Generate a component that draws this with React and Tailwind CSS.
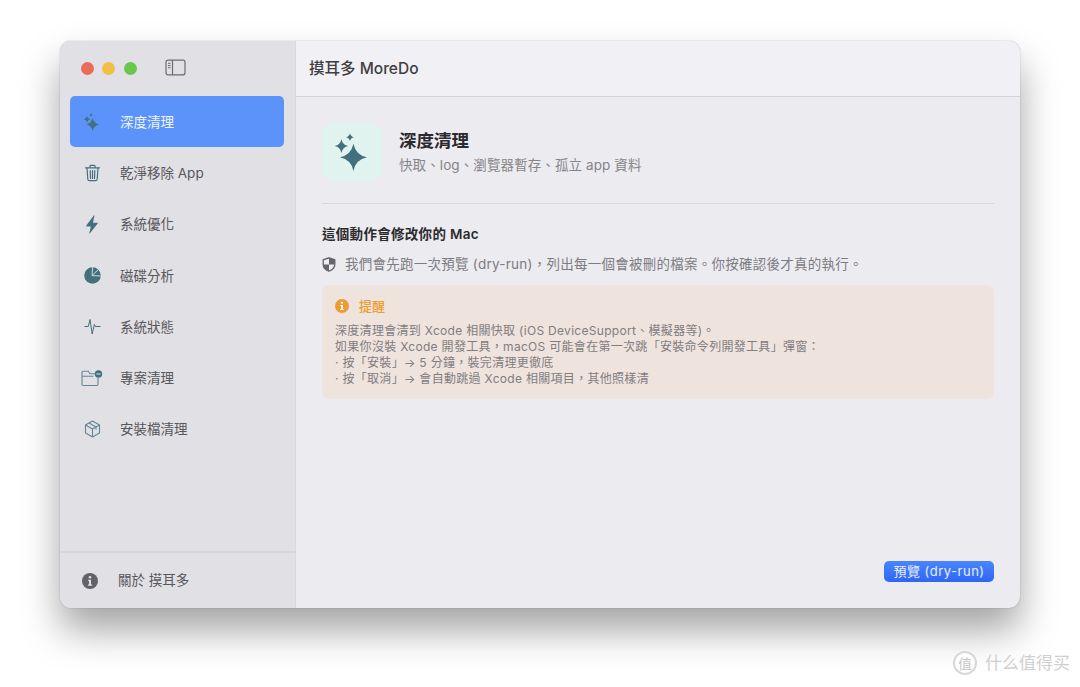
import React from "react";

const FONT = "font-['Inter','Noto_Sans_CJK_TC',sans-serif]";

// four point star, k pulls the sides in towards the middle
const star = (cx, cy, r, k = 0.17) => {
  const c = r * k;
  return `M${cx} ${cy - r}Q${cx + c} ${cy - c} ${cx + r} ${cy}Q${cx + c} ${cy + c} ${cx} ${cy + r}Q${cx - c} ${cy + c} ${cx - r} ${cy}Q${cx - c} ${cy - c} ${cx} ${cy - r}Z`;
};

const Sparkles = ({ size = 20, color = "#44707e" }) => (
  <svg width={size} height={size} viewBox="0 0 32 32" fill={color}>
    <path d={star(17.2, 20.5, 11.4)} />
    <path d={star(7.1, 11, 5.8)} />
    <path d={star(14.3, 3.5, 3.3)} />
  </svg>
);

const Trash = () => (
  <svg width="17" height="18" viewBox="0 0 17 18" fill="none" stroke="#44707e" strokeWidth="1.2" strokeLinecap="round">
    <path d="M1.500 3.800h14M6 3.500V2.200c0-.5.300-.8.800-.8h3.400c.5 0 .8.300.8.800v1.300" />
    <path d="M3 4l.8 11.200c.1.900.6 1.400 1.500 1.400h6.400c.9 0 1.400-.5 1.500-1.400L14 4" />
    <path d="M6.200 6.500l.3 8M8.500 6.500v8M10.800 6.500l-.3 8" />
  </svg>
);

const Bolt = () => (
  <svg width="14" height="19" viewBox="0 0 14 19" fill="#44707e">
    <path d="M8.800.5L1.300 10.600c-.3.400-.1.800.4.800h4.100L4.300 18.300c-.1.400.2.500.5.200l7.900-10c.3-.4.100-.8-.4-.8H8L9.400.8C9.500.3 9.100.2 8.800.5z" />
  </svg>
);

const Pie = () => (
  <svg width="17" height="17" viewBox="0 0 17 17">
    <circle cx="8.500" cy="8.500" r="8.300" fill="#44707e" />
    <path d="M8 8.600L8.700 0M8 8.600l6.300-6M8 8.600l8.800.4" fill="none" stroke="#e1e0e5" strokeWidth="0.9" />
  </svg>
);

const Pulse = () => (
  <svg width="17" height="17" viewBox="0 0 17 17" fill="none" stroke="#44707e" strokeWidth="1" strokeLinecap="round" strokeLinejoin="round">
    <path d="M.8 8.500h3.500l1.700-7 2.200 14.500 2.200-9.500 1 2h4.800" />
  </svg>
);

const FolderMinus = () => (
  <svg width="22" height="17" viewBox="0 0 22 17" fill="none">
    <path d="M15 3.800H9L7.300 1.300H2.200c-.8 0-1.200.4-1.200 1.200v11.800c0 .8.400 1.200 1.200 1.200h13.600c.8 0 1.200-.4 1.200-1.200V8M1 6.300h11.500" stroke="#5f8895" strokeWidth="1.100" />
    <circle cx="17.500" cy="4" r="3.700" fill="#44707e" />
    <path d="M15.500 4h4" stroke="#e2e0e5" strokeWidth="1.100" />
  </svg>
);

const Box = () => (
  <svg width="17" height="18" viewBox="0 0 17 18" fill="none" stroke="#5f8895" strokeWidth="1.100" strokeLinejoin="round">
    <path d="M8.500 1l7 4v8l-7 4-7-4V5z" />
    <path d="M1.500 5l7 4 7-4M8.500 9v8M5 3l7 4v2.500" />
  </svg>
);

const PanelIcon = () => (
  <svg width="21" height="17" viewBox="0 0 21 17" fill="none" stroke="#6b6a70" strokeWidth="1.200">
    <rect x="1" y="1.200" width="19" height="14.600" rx="2" />
    <path d="M7.500 1.200v14.600" />
    <path d="M3 4.300h2.500M3 6.500h2.500M3 8.700h2.500" strokeWidth="1" />
  </svg>
);

const Shield = () => (
  <svg width="14" height="15" viewBox="0 0 14 15">
    <path d="M7 .8l5.800 2v4.400c0 3.300-2.300 5.700-5.800 7-3.500-1.300-5.800-3.700-5.800-7V2.800z" fill="none" stroke="#66656b" strokeWidth="1.300" />
    <path d="M7 .8v6.700h5.800V2.800zM7 7.500H1.200c0 3.300 2.300 5.700 5.800 6.700z" fill="#66656b" />
  </svg>
);

const InfoDot = ({ size, color, inner = "#fff" }) => (
  <svg width={size} height={size} viewBox="0 0 16 16">
    <circle cx="8" cy="8" r="8" fill={color} />
    <circle cx="8" cy="4.300" r="1.300" fill={inner} />
    <path d="M6.200 6.800h2.800v4.700h1.100v1.200H5.900v-1.200H7V8H6.200z" fill={inner} />
  </svg>
);

const NAV = [
  { label: "深度清理", icon: <Sparkles size={18} /> },
  { label: "乾淨移除 App", icon: <Trash /> },
  { label: "系統優化", icon: <Bolt /> },
  { label: "磁碟分析", icon: <Pie /> },
  { label: "系統狀態", icon: <Pulse /> },
  { label: "專案清理", icon: <FolderMinus /> },
  { label: "安裝檔清理", icon: <Box /> },
];

const NavItem = ({ label, icon, active }) => (
  <div className={`flex h-[51.2px] items-center rounded-[5px] pt-[1px] ${active ? "bg-[#5b93fb] text-[#eef3fd]" : "text-[#58575c]"}`}>
    <span className="flex w-[44px] shrink-0 justify-center">{icon}</span>
    <span className="pl-[6px] text-[13.5px]">{label}</span>
  </div>
);

export default function App() {
  return (
    <div className={`relative h-[687px] w-[1080px] overflow-hidden bg-white pl-[60px] pt-[41px] ${FONT}`}>
      <div className="flex h-[567px] w-[960px] overflow-hidden rounded-[11px] bg-[#ecebf0] shadow-[0_22px_38px_rgba(0,0,0,0.36),0_0_1px_rgba(0,0,0,0.5)]">
        {/* sidebar */}
        <aside className="flex w-[236px] shrink-0 flex-col border-r border-[#d9d8dc] bg-[#e1e0e5]">
          <div className="flex h-[55px] shrink-0 items-center pl-[21px]">
            <span className="h-[13px] w-[13px] rounded-full bg-[#ea6a5c]" />
            <span className="ml-[8px] h-[13px] w-[13px] rounded-full bg-[#f2bf45]" />
            <span className="ml-[8.500px] h-[13px] w-[13px] rounded-full bg-[#69c84b]" />
            <span className="mb-[2px] ml-[28.500px] flex"><PanelIcon /></span>
          </div>
          <nav className="flex-1 pl-[10px] pr-[11px]">
            {NAV.map((item, i) => (
              <NavItem key={item.label} label={item.label} icon={item.icon} active={i === 0} />
            ))}
          </nav>
          <div className="flex h-[57px] shrink-0 items-center border-t-2 border-[#d8d6dc] pl-[22px] text-[13.500px] text-[#58575c]">
            <InfoDot size={16} color="#636268" inner="#e1e0e5" />
            <span className="ml-[20px]">關於 摸耳多</span>
          </div>
        </aside>

        {/* main */}
        <main className="flex min-w-0 flex-1 flex-col">
          <header className="flex h-[56px] shrink-0 items-center border-b border-[#d3d2d6] bg-[#f1f0f4] pl-[13px] text-[15.500px] font-medium text-[#3f3e42]">
            摸耳多 MoreDo
          </header>
          <div className="flex flex-1 flex-col pl-[26px] pr-[26px] pt-[25px]">
            <div className="flex items-center border-b border-[#d9d8dc] pb-[21px]">
              <div className="flex h-[60px] w-[60px] items-center justify-center rounded-[13px] bg-[#e0f3ef]">
                <Sparkles size={38} />
              </div>
              <div className="ml-[17px] -translate-y-px">
                <div className="text-[17.500px] font-semibold leading-[24px] text-[#2b2a2e]">深度清理</div>
                <div className="mt-[3px] text-[13.500px] leading-[18px] tracking-[0.1px] text-[#85848a]">快取、log、瀏覽器暫存、孤立 app 資料</div>
              </div>
            </div>
            <div className="mt-[20px] text-[13.500px] font-semibold leading-[20px] tracking-[0.3px] text-[#2b2a2e]">這個動作會修改你的 Mac</div>
            <div className="mt-[10px] flex items-center text-[13.500px] leading-[20px] tracking-[0.25px] text-[#7d7c82]">
              <Shield />
              <span className="ml-[9px]">我們會先跑一次預覽 (dry-run)，列出每一個會被刪的檔案。你按確認後才真的執行。</span>
            </div>
            <div className="mt-[11px] rounded-[7px] bg-[#efe3de] px-[13px] pb-[12px] pt-[11px]">
              <div className="flex items-center text-[13px] font-medium leading-[20px] text-[#ee9c2f]">
                <InfoDot size={14} color="#ee9c2f" />
                <span className="ml-[10px]">提醒</span>
              </div>
              <div className="mt-[7px] text-[12px] leading-[16px] tracking-[0.3px] text-[#7f7d7f]">
                <div>深度清理會清到 Xcode 相關快取 (iOS DeviceSupport、模擬器等)。</div>
                <div>如果你沒裝 Xcode 開發工具，macOS 可能會在第一次跳「安裝命令列開發工具」彈窗：</div>
                <div>· 按「安裝」→ 5 分鐘，裝完清理更徹底</div>
                <div>· 按「取消」→ 會自動跳過 Xcode 相關項目，其他照樣清</div>
              </div>
            </div>
            <div className="mt-auto flex justify-end pb-[26px]">
              <button className="flex h-[21px] w-[110px] items-center justify-center rounded-[5px] bg-gradient-to-b from-[#4a85fb] to-[#2f66f5] text-[13px] tracking-[0.5px] text-[#e8effe]">
                預覽 (dry-run)
              </button>
            </div>
          </div>
        </main>
      </div>

      {/* watermark */}
      <div className="absolute bottom-[11px] right-[10px] flex items-center text-[#cfcfcf]">
        <span className="flex h-[24px] w-[24px] items-center justify-center rounded-full border-2 border-[#d8d8d8] bg-white text-[14px] text-[#c8c8c8]">值</span>
        <span className="ml-[8px] text-[17px]">什么值得买</span>
      </div>
    </div>
  );
}
